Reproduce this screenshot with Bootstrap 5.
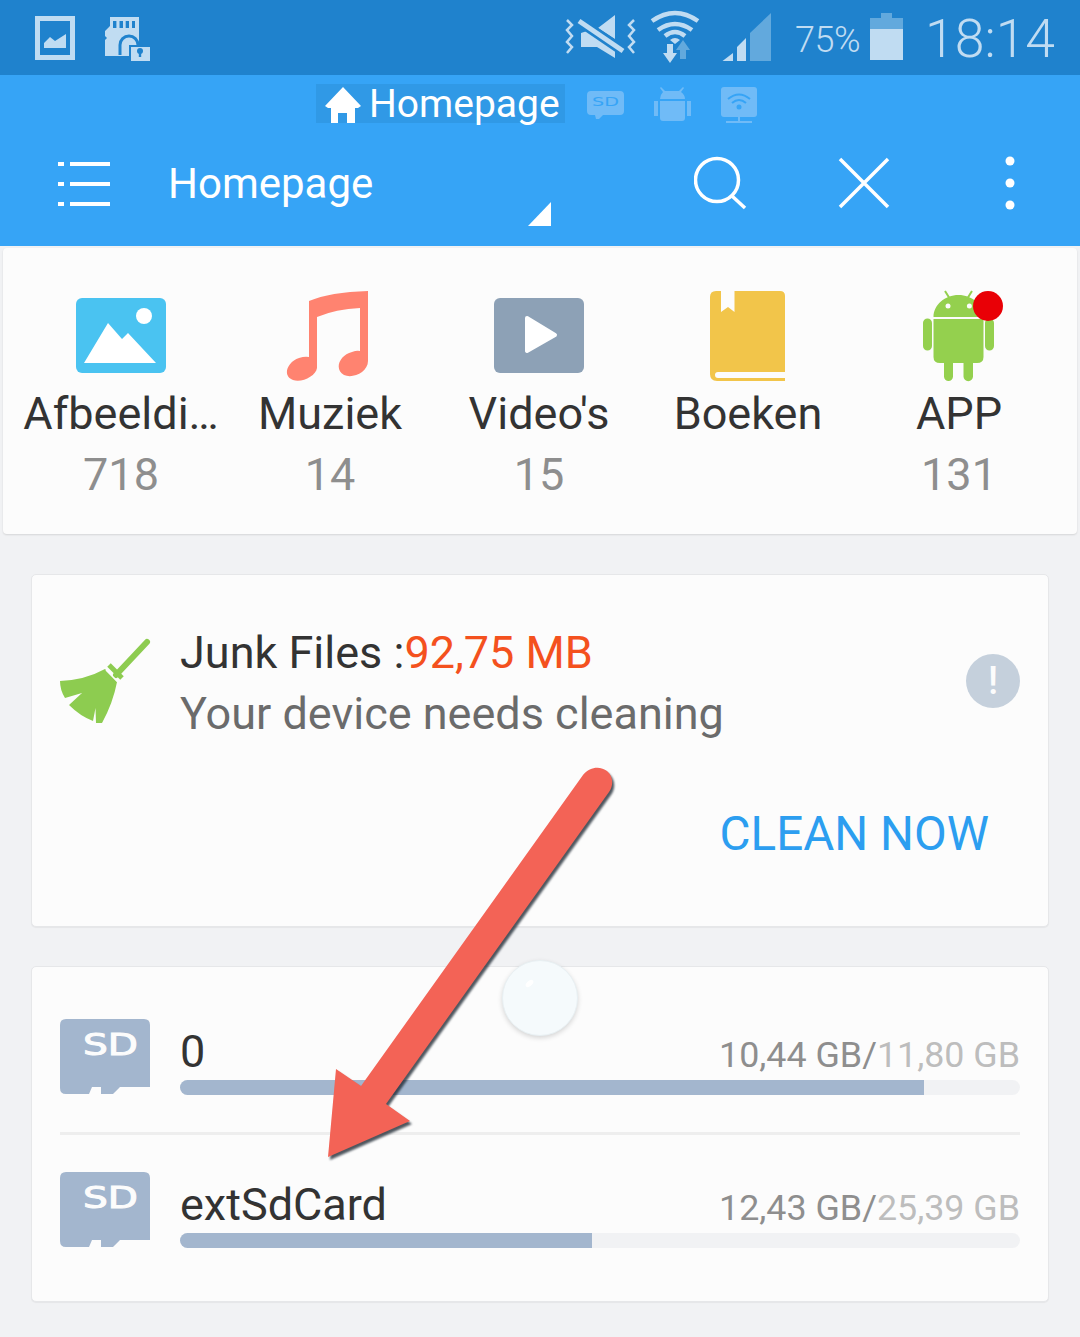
<!DOCTYPE html>
<html lang="nl">
<head>
    <meta charset="UTF-8">
    <meta name="viewport" content="width=device-width, initial-scale=1.0">
    <title>Homepage</title>
    <link href="https://cdn.jsdelivr.net/npm/bootstrap@5.3.3/dist/css/bootstrap.min.css" rel="stylesheet">
    <style>
        body { margin: 0; background: #f1f2f4; font-family: Roboto, "Liberation Sans", sans-serif; color: #333; }
        .screen { width: 1080px; height: 1337px; overflow: hidden; background: #f1f2f4; }
        svg { display: block; flex-shrink: 0; }

        .status-bar { height: 75px; background: #1f82cd; color: #c0dcf2; padding: 0 25px 0 35px; }
        .status-pct { font-size: 36px; font-weight: 300; line-height: 75px; margin: 3px 10px 0 24px; letter-spacing: -.5px; }
        .status-time { font-size: 53.5px; font-weight: 300; line-height: 75px; margin: 1px 0 0 22px; }
        .gap-sd { margin-left: 30px; }
        .gap-wifi { margin-left: 14px; }
        .gap-signal { margin-left: 22px; }

        .app-bar { height: 171px; background: #36a4f6; color: #fff; }
        .tab-row { height: 48px; padding: 9px 0 0 316px; }
        .tab-active { height: 39px; width: 249px; background: #3099e6; font-size: 39px; line-height: 40px; padding-left: 9px; white-space: nowrap; }
        .tab-home { margin-right: 8px; }
        .tab-icon-first { margin-left: 22px; }
        .tab-icon { margin-left: 30px; }
        .tool-row { height: 123px; padding-left: 58px; }
        .tool-title { font-size: 42px; line-height: 122px; margin-left: 58px; width: 360px; }
        .tool-search { margin-left: 142px; }
        .tool-close { margin-left: 90px; }
        .tool-dots { margin-left: 115px; }

        .shelf-card { margin: 2px 3px 0; height: 286px; padding: 43px 13.5px 0; background: #fcfcfc; border: 0; border-radius: 4px; box-shadow: 0 1px 2px rgba(0,0,0,.12); }
        .shelf-item { width: 209px; text-align: center; }
        .shelf-item-last { margin-left: 2px; }
        .shelf-icon { height: 90px; display: flex; justify-content: center; margin-bottom: 2px; }
        .shelf-music { margin-right: 6px; }
        .shelf-android { overflow: visible; margin-right: 2px; }
        .shelf-name { font-size: 45px; line-height: 61px; color: #333; white-space: nowrap; }
        .shelf-count { font-size: 45px; line-height: 61px; color: #8e8e8e; height: 61px; }

        .panel { margin: 0 31px; background: #fcfcfc; border: 1px solid #e6e7e9; border-radius: 5px; box-shadow: 0 1px 1px rgba(0,0,0,.05); }
        .panel-junk { margin-top: 40px; height: 353px; }
        .panel-drives { margin-top: 39px; height: 336px; padding: 52px 28px 0; }
        .junk-row { padding: 47px 28px 0 28px; }
        .junk-text { font-size: 45px; line-height: 61px; white-space: nowrap; }
        .junk-sub { color: #6b6b6b; }
        .junk-size { color: #f4511e; }
        .junk-alert { width: 54px; height: 54px; background: #c5d0dc; color: #fcfcfc; font-size: 38px; font-weight: 500; margin-bottom: 4px; }
        .clean-row { margin-top: 60px; padding-right: 59px; }
        .clean-link { font-size: 47.6px; line-height: 61px; color: #2c9ef0; text-decoration: none; }

        .drive-row { height: 76px; gap: 30px; }
        .drive-head { height: 61px; padding-top: 4px; }
        .drive-name { font-size: 45px; line-height: 57px; color: #333; }
        .drive-used { font-size: 35.8px; line-height: 57px; color: #8e8e8e; }
        .drive-total { color: #bdbdbd; }
        .progress { --bs-progress-height: 15px; --bs-progress-bg: #f1f2f4; --bs-progress-bar-bg: #a3b6ce; --bs-progress-border-radius: 8px; }
        .drive-sep { margin: 37px 0; height: 3px; background: #eeeeee; border: 0; opacity: 1; }

        .float-ball { left: 502px; top: 960px; width: 76px; height: 76px; background: #f5fafc; border: 1px solid #e8f0f3; box-shadow: 0 2px 5px rgba(0,0,0,.16); }
        .float-shine { left: 22px; top: 20px; width: 9px; height: 5px; background: #fff; transform: rotate(-40deg); }
        .arrow-layer { left: 0; top: 0; filter: drop-shadow(2px 3px 1px rgba(30,40,50,.78)); pointer-events: none; }
    </style>
</head>
<body>
<div class="screen position-relative">

    <!-- Status bar -->
    <div class="status-bar d-flex align-items-start">
        <svg width="40" height="75" viewBox="35 0 40 75">
            <path fill="#c0dcf2" fill-rule="evenodd" d="M35 16H75V60H35ZM40 21V55H70V21Z"/>
            <path fill="#c0dcf2" d="M44 43 50 37 55 41 66 34V48H44Z"/>
        </svg>
        <svg class="gap-sd" width="46" height="75" viewBox="105 0 46 75">
            <path fill="#c0dcf2" d="M110 17H139V56H105V40L107 38 105 36V31L110 26Z"/>
            <path fill="#1f82cd" d="M113 21h3.400v7H113ZM119.500 21H123v7h-3.500ZM125.700 21H129v7h-3.300ZM132 21h3v7h-3Z"/>
            <path fill="none" stroke="#1f82cd" stroke-width="3" d="M120 55V45A9 9 0 0 1 138 45"/>
            <path fill="#c0dcf2" stroke="#1f82cd" stroke-width="2" d="M130 46H151V62H130Z"/>
            <circle cx="140" cy="51" r="3" fill="#1f82cd"/>
            <path fill="#1f82cd" d="M138.800 52h2.400v5h-2.400Z"/>
        </svg>
        <div class="ms-auto d-flex align-items-start">
            <svg width="71" height="75" viewBox="565 0 71 75">
                <path fill="none" stroke="#c0dcf2" stroke-width="2.500" d="M567 20 572 25 567 30 572 36 567 42 572 47 567 53M634 20 629 25 634 30 629 36 634 42 629 47 634 53"/>
                <path fill="#c0dcf2" d="M615 15V39L598 28ZM581 33V47H597L615 58V47L590 30Z"/>
                <path stroke="#1f82cd" stroke-width="10" d="M579 21 623 51"/>
                <path stroke="#c0dcf2" stroke-width="5" d="M579 21 623 51"/>
            </svg>
            <svg class="gap-wifi" width="50" height="75" viewBox="650 0 50 75">
                <path fill="none" stroke="#c0dcf2" stroke-width="4.500" d="M652 21Q675 5 698 21"/>
                <path fill="none" stroke="#c0dcf2" stroke-width="4.500" d="M658 30Q675 18 692 30"/>
                <path fill="none" stroke="#c0dcf2" stroke-width="4.500" d="M665 36Q675 28 685 36"/>
                <path fill="#c0dcf2" d="M670 40Q675 36 680 40L675 44Z"/>
                <path fill="#62a9dd" d="M683 40 690 50H686V59H680V50H676Z"/>
                <path fill="#c0dcf2" d="M667 44H673V53H677L670 63 663 53H667Z"/>
            </svg>
            <svg class="gap-signal" width="49" height="75" viewBox="722 0 49 75">
                <path fill="#c0dcf2" d="M722.500 61 733 53V61ZM737 61V47L746 38V61Z"/>
                <path fill="#62a9dd" d="M750 61V33L771 13V61Z"/>
            </svg>
            <span class="status-pct">75%</span>
            <svg width="33" height="75" viewBox="870 0 33 75">
                <path fill="#62a9dd" d="M881 13H892V18H903V29H870V18H881Z"/>
                <path fill="#c0dcf2" d="M870 29H903V60H870Z"/>
            </svg>
            <span class="status-time">18:14</span>
        </div>
    </div>

    <!-- App bar -->
    <div class="app-bar">
        <div class="tab-row d-flex align-items-start">
            <div class="tab-active d-flex">
                <svg class="tab-home" width="36" height="39" viewBox="325 84 36 39">
                    <path fill="#fff" d="M343 87 361 106 358 108H355V123H347V113H338V123H331V108H328L325 106Z"/>
                </svg>
                <span>Homepage</span>
            </div>
            <svg class="tab-icon-first" width="37" height="39" viewBox="587 84 37 39">
                <path fill="#70bbf7" d="M591 91H620Q624 91 624 95V111Q624 115 620 115H603L599 119 596 119 595 115H591Q587 115 587 111V95Q587 91 591 91Z"/>
                <text x="605.500" y="106" text-anchor="middle" font-family="DejaVu Sans" font-size="13" fill="#36a4f6" textLength="27" lengthAdjust="spacingAndGlyphs">SD</text>
            </svg>
            <svg class="tab-icon" width="37" height="39" viewBox="654 84 37 39">
                <path fill="#70bbf7" d="M661 87 665 91H679L683 87 684 88 681 92Q685 95 685 99H660Q660 95 663 92L660 88ZM660 101H685V118Q685 121 682 121H663Q660 121 660 118ZM654 101h4v15h-4ZM687 101h4v15h-4Z"/>
            </svg>
            <svg class="tab-icon" width="36" height="39" viewBox="720 84 36 39">
                <rect x="720" y="87" width="36" height="30" rx="3" fill="#70bbf7"/>
                <path fill="none" stroke="#36a4f6" stroke-width="2" d="M727 99Q738 90 749 99M731 103Q738 97 745 103"/>
                <circle cx="738" cy="107" r="2.500" fill="#36a4f6"/>
                <path stroke="#70bbf7" stroke-width="2" d="M738 117V122M725 122H751"/>
            </svg>
        </div>
        <div class="tool-row d-flex align-items-start">
            <svg width="52" height="122" viewBox="58 123 52 122">
                <path fill="#fff" d="M58 162h6v4h-6ZM70 162h40v4H70ZM58 182h6v4h-6ZM70 182h40v4H70ZM58 202h6v4h-6ZM70 202h40v4H70Z"/>
            </svg>
            <span class="tool-title">Homepage</span>
            <svg width="24" height="122" viewBox="528 123 24 122">
                <path fill="#fff" d="M551 202V226H528Z"/>
            </svg>
            <svg class="tool-search" width="54" height="122" viewBox="694 123 54 122">
                <circle cx="717" cy="180" r="21.500" fill="none" stroke="#fff" stroke-width="3.500"/>
                <path stroke="#fff" stroke-width="3.500" d="M732 196 745 208"/>
            </svg>
            <svg class="tool-close" width="52" height="122" viewBox="838 123 52 122">
                <path stroke="#fff" stroke-width="3.500" d="M840 159 888 207M888 159 840 207"/>
            </svg>
            <svg class="tool-dots" width="10" height="122" viewBox="1005 123 10 122">
                <circle cx="1010" cy="161" r="4.500" fill="#fff"/>
                <circle cx="1010" cy="183" r="4.500" fill="#fff"/>
                <circle cx="1010" cy="205" r="4.500" fill="#fff"/>
            </svg>
        </div>
    </div>

    <!-- Categorieen -->
    <div class="card shelf-card d-flex flex-row">
        <div class="shelf-item">
            <div class="shelf-icon">
                <svg width="90" height="90" viewBox="76 291 90 90">
                    <rect x="76" y="298" width="90" height="75" rx="6" fill="#4ac3f1"/>
                    <circle cx="144" cy="316" r="8" fill="#fff"/>
                    <path fill="#fff" d="M84 363 108 323 122 339 128 333 156 363Z"/>
                </svg>
            </div>
            <div class="shelf-name">Afbeeldi…</div>
            <div class="shelf-count">718</div>
        </div>
        <div class="shelf-item">
            <div class="shelf-icon">
                <svg class="shelf-music" width="82" height="90" viewBox="286 291 82 90">
                    <path fill="#ff8370" d="M309 301Q330 292 368 291V361C368 372 353 379 344 375 334 370 339 355 352 352Q357 350 360 351V308Q336 309 317 317V368C316 376 302 383 293 380 282 376 287 362 299 358Q305 356 309 357Z"/>
                </svg>
            </div>
            <div class="shelf-name">Muziek</div>
            <div class="shelf-count">14</div>
        </div>
        <div class="shelf-item">
            <div class="shelf-icon">
                <svg width="90" height="90" viewBox="494 291 90 90">
                    <rect x="494" y="298" width="90" height="75" rx="6" fill="#8da1b6"/>
                    <path fill="#fff" stroke="#fff" stroke-width="4" stroke-linejoin="round" d="M527 318 555 335 527 351Z"/>
                </svg>
            </div>
            <div class="shelf-name">Video's</div>
            <div class="shelf-count">15</div>
        </div>
        <div class="shelf-item">
            <div class="shelf-icon">
                <svg width="76" height="90" viewBox="710 291 76 90">
                    <path fill="#f2c54a" d="M716 291H780Q785 291 785 296V381H717Q710 381 710 374V297Q710 291 716 291Z"/>
                    <path fill="#fcfcfc" d="M721 291H734.500V312L728 307 721 312ZM785 372V378H718Q715 378 715 375 715 372 718 372Z"/>
                </svg>
            </div>
            <div class="shelf-name">Boeken</div>
        </div>
        <div class="shelf-item shelf-item-last">
            <div class="shelf-icon">
                <svg class="shelf-android" width="71" height="90" viewBox="923 291 71 90">
                    <path fill="#94d04e" d="M933.500 317C933.500 305 945 295 958.500 295S983.500 305 983.500 317ZM933.500 319H983.500V357Q983.500 363 977 363H940Q933.500 363 933.500 357ZM923 323a4.500 4.500 0 0 1 9 0V346a4.500 4.500 0 0 1-9 0ZM985 323a4.500 4.500 0 0 1 9 0V346a4.500 4.500 0 0 1-9 0ZM944 363h9V376.500a4.500 4.500 0 0 1-9 0ZM963.500 363h9.500V376.500a4.700 4.700 0 0 1-9.500 0Z"/>
                    <path stroke="#94d04e" stroke-width="2" d="M945 291 950 299M972 291 967 299"/>
                    <circle cx="948" cy="306" r="2.500" fill="#fcfcfc"/>
                    <circle cx="969.400" cy="306" r="2.500" fill="#fcfcfc"/>
                    <circle cx="988" cy="306" r="15" fill="#e90006"/>
                </svg>
            </div>
            <div class="shelf-name">APP</div>
            <div class="shelf-count">131</div>
        </div>
    </div>

    <!-- Junk files -->
    <div class="card panel panel-junk">
        <div class="junk-row d-flex align-items-center">
            <svg width="120" height="122" viewBox="60 622 120 122">
                <path stroke="#8dcc50" stroke-width="6" stroke-linecap="round" d="M147 642 116 675"/>
                <path stroke="#8dcc50" stroke-width="5" d="M109 665 122 678"/>
                <path fill="#8dcc50" d="M60 681Q85 680 105 669L117 682Q113 703 102 723L96 723 95.500 708 93 721Q80 716 69 705L82 693 65 698Q60 690 60 681Z"/>
                <path stroke="#fcfcfc" stroke-width="1.500" d="M106 670 118 682"/>
            </svg>
            <div class="junk-text flex-grow-1">
                <div>Junk Files :<span class="junk-size">92,75 MB</span></div>
                <div class="junk-sub">Your device needs cleaning</div>
            </div>
            <div class="junk-alert rounded-circle d-flex align-items-center justify-content-center">!</div>
        </div>
        <div class="clean-row d-flex justify-content-end">
            <a class="clean-link" href="#clean">CLEAN NOW</a>
        </div>
    </div>

    <!-- Opslag -->
    <div class="card panel panel-drives">
        <div class="drive-row d-flex">
            <svg width="90" height="75" viewBox="0 0 90 75">
                <path fill="#a3b6ce" d="M6 0H84Q90 0 90 6V68H60L53 75H41V68H32L29 75H6Q0 75 0 69V6Q0 0 6 0Z"/>
                <text x="50.500" y="36" text-anchor="middle" font-family="DejaVu Sans" font-size="30" fill="#fcfcfc" stroke="#fcfcfc" stroke-width="1" textLength="55" lengthAdjust="spacingAndGlyphs">SD</text>
            </svg>
            <div class="flex-grow-1">
                <div class="drive-head d-flex justify-content-between align-items-baseline">
                    <span class="drive-name">0</span>
                    <span class="drive-used">10,44 GB/<span class="drive-total">11,80 GB</span></span>
                </div>
                <div class="progress">
                    <div class="progress-bar" style="width: 88.6%"></div>
                </div>
            </div>
        </div>
        <hr class="drive-sep">
        <div class="drive-row d-flex">
            <svg width="90" height="75" viewBox="0 0 90 75">
                <path fill="#a3b6ce" d="M6 0H84Q90 0 90 6V68H60L53 75H41V68H32L29 75H6Q0 75 0 69V6Q0 0 6 0Z"/>
                <text x="50.500" y="36" text-anchor="middle" font-family="DejaVu Sans" font-size="30" fill="#fcfcfc" stroke="#fcfcfc" stroke-width="1" textLength="55" lengthAdjust="spacingAndGlyphs">SD</text>
            </svg>
            <div class="flex-grow-1">
                <div class="drive-head d-flex justify-content-between align-items-baseline">
                    <span class="drive-name">extSdCard</span>
                    <span class="drive-used">12,43 GB/<span class="drive-total">25,39 GB</span></span>
                </div>
                <div class="progress">
                    <div class="progress-bar" style="width: 49%"></div>
                </div>
            </div>
        </div>
    </div>

    <!-- Zwevende knop en pijl liggen over de inhoud -->
    <div class="float-ball position-absolute rounded-circle">
        <div class="float-shine position-absolute rounded-circle"></div>
    </div>
    <svg class="arrow-layer position-absolute" width="1080" height="1337" viewBox="0 0 1080 1337">
        <path fill="#f36356" d="M361 1086 583 775C590 766 601 766 607 771 613 776 614 785 609 792L386 1104 410 1121 328 1157 336 1069Z"/>
    </svg>
</div>

<script src="https://cdn.jsdelivr.net/npm/bootstrap@5.3.3/dist/js/bootstrap.bundle.min.js"></script>
</body>
</html>
